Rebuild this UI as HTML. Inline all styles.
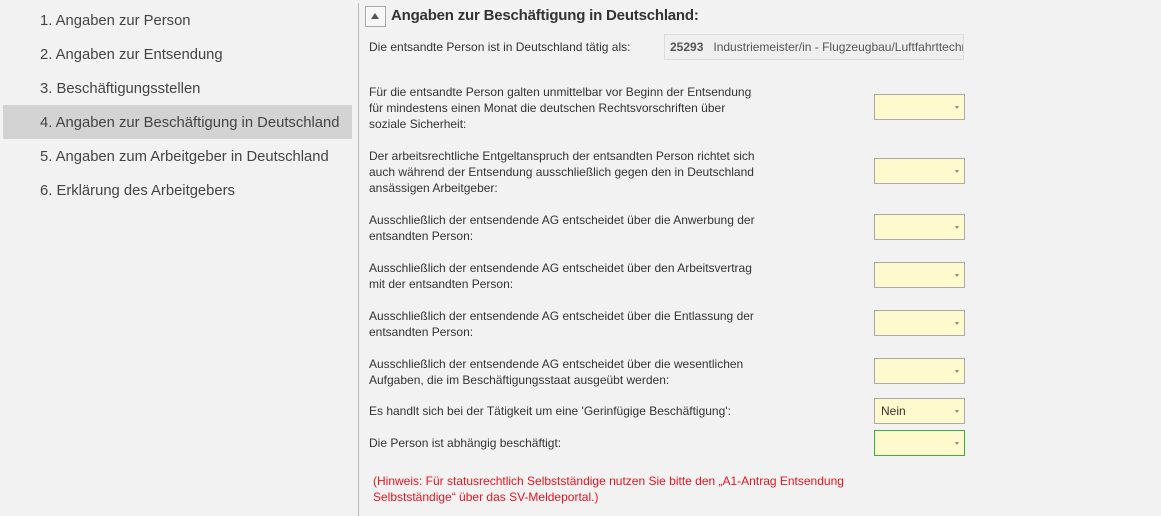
<!DOCTYPE html>
<html><head><meta charset="utf-8">
<style>
*{margin:0;padding:0;box-sizing:border-box}
body{width:1161px;height:516px;background:#f2f2f2;font-family:"Liberation Sans",sans-serif;color:#333;position:relative;overflow:hidden}
.nav{position:absolute;left:40px;font-size:14.8px;color:#444;line-height:20px}
.hl{position:absolute;left:3px;top:105px;width:349px;height:34px;background:#d3d3d3}
.div{position:absolute;left:358px;top:3px;width:1px;height:513px;background:#b8b8b8}
.tog{position:absolute;left:365px;top:6px;width:21px;height:21px;border:1px solid #aaa;background:#f7f7f7}
.tog:after{content:"";position:absolute;left:5px;top:6px;border-left:4.5px solid transparent;border-right:4.5px solid transparent;border-bottom:6px solid #555}
.title{position:absolute;left:391px;top:7px;font-size:15px;font-weight:bold;color:#333;letter-spacing:-0.2px}
.lbl{position:absolute;left:369px;font-size:12px;line-height:16px;color:#333;letter-spacing:0}
.dd{position:absolute;left:874px;width:91px;height:26px;background:#fffacd;border:1px solid #aaa}
.dd:after{content:"";position:absolute;right:5px;top:11px;border-left:2.5px solid transparent;border-right:2.5px solid transparent;border-top:3px solid #888}
.dd span{position:absolute;left:6px;top:5px;font-size:12px;color:#333}
.fld{position:absolute;left:664px;top:34px;width:300px;height:26px;border:1px solid #ddd;background:#efefef;font-size:12px;line-height:24px;padding-left:5px;color:#555;white-space:nowrap;overflow:hidden}
.hint{position:absolute;left:373px;top:473px;font-size:12px;line-height:16px;color:#e8141e}
</style></head><body>
<div class="hl"></div>
<div class="nav" style="top:11px">1. Angaben zur Person</div>
<div class="nav" style="top:45px">2. Angaben zur Entsendung</div>
<div class="nav" style="top:79px">3. Beschäftigungsstellen</div>
<div class="nav" style="top:113px">4. Angaben zur Beschäftigung in Deutschland</div>
<div class="nav" style="top:147px">5. Angaben zum Arbeitgeber in Deutschland</div>
<div class="nav" style="top:181px">6. Erklärung des Arbeitgebers</div>
<div class="div"></div>
<div class="tog"></div>
<div class="title">Angaben zur Beschäftigung in Deutschland:</div>
<div class="lbl" style="top:39px">Die entsandte Person ist in Deutschland tätig als:</div>
<div class="fld"><b style="color:#555">25293</b>&nbsp;&nbsp; Industriemeister/in - Flugzeugbau/Luftfahrttechnik</div>

<div class="lbl" style="top:84px">Für die entsandte Person galten unmittelbar vor Beginn der Entsendung<br>für mindestens einen Monat die deutschen Rechtsvorschriften über<br>soziale Sicherheit:</div>
<div class="dd" style="top:94px"></div>
<div class="lbl" style="top:148px">Der arbeitsrechtliche Entgeltanspruch der entsandten Person richtet sich<br>auch während der Entsendung ausschließlich gegen den in Deutschland<br>ansässigen Arbeitgeber:</div>
<div class="dd" style="top:158px"></div>
<div class="lbl" style="top:212px">Ausschließlich der entsendende AG entscheidet über die Anwerbung der<br>entsandten Person:</div>
<div class="dd" style="top:214px"></div>
<div class="lbl" style="top:260px">Ausschließlich der entsendende AG entscheidet über den Arbeitsvertrag<br>mit der entsandten Person:</div>
<div class="dd" style="top:262px"></div>
<div class="lbl" style="top:308px">Ausschließlich der entsendende AG entscheidet über die Entlassung der<br>entsandten Person:</div>
<div class="dd" style="top:310px"></div>
<div class="lbl" style="top:356px">Ausschließlich der entsendende AG entscheidet über die wesentlichen<br>Aufgaben, die im Beschäftigungsstaat ausgeübt werden:</div>
<div class="dd" style="top:358px"></div>
<div class="lbl" style="top:403px">Es handlt sich bei der Tätigkeit um eine 'Gerinfügige Beschäftigung':</div>
<div class="dd" style="top:398px"><span>Nein</span></div>
<div class="lbl" style="top:435px">Die Person ist abhängig beschäftigt:</div>
<div class="dd" style="top:430px;border-color:#3cb034"></div>
<div class="hint">(Hinweis: Für statusrechtlich Selbstständige nutzen Sie bitte den „A1-Antrag Entsendung<br>Selbstständige“ über das SV-Meldeportal.)</div>
</body></html>
